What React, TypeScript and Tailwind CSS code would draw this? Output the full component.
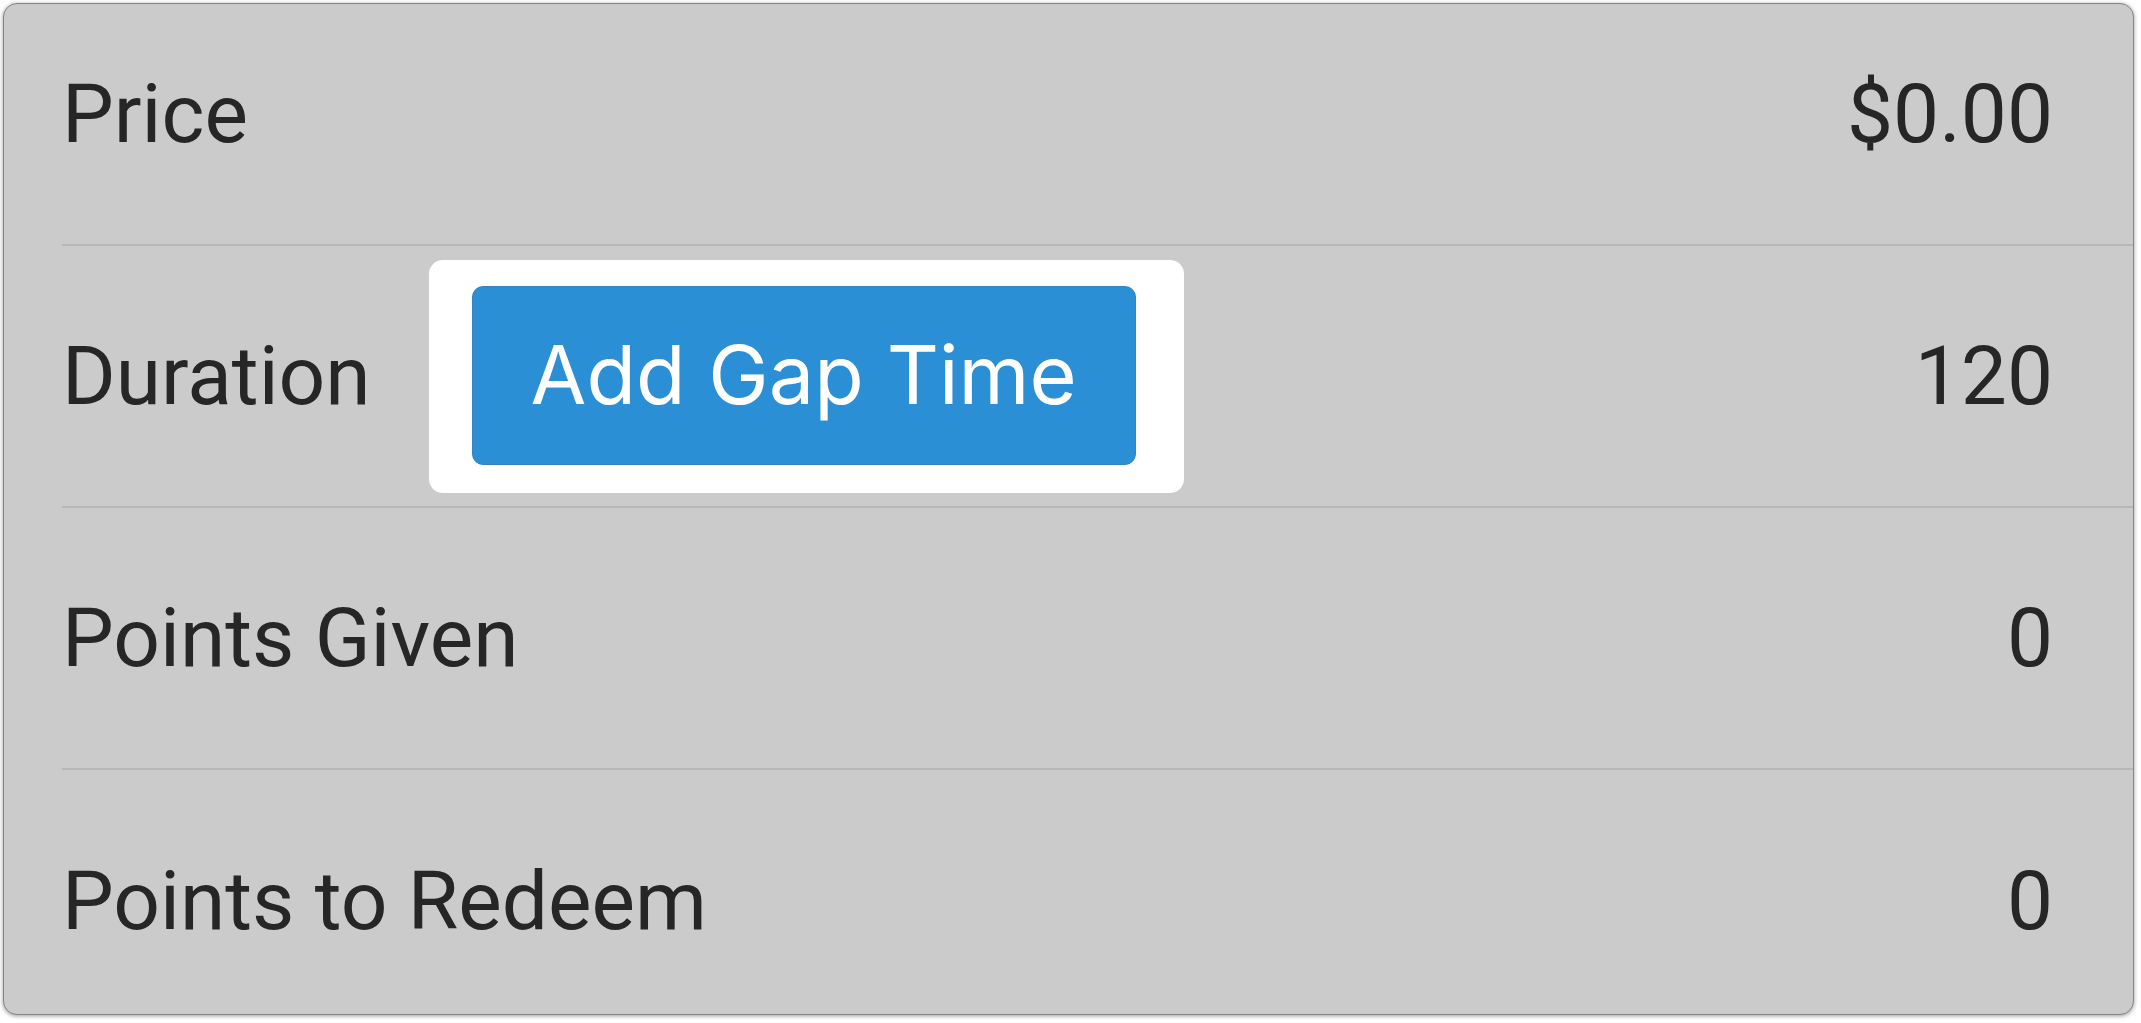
const rows = [
  { label: "Price", value: "$0.00" },
  { label: "Duration", value: "120", action: "Add Gap Time" },
  { label: "Points Given", value: "0" },
  { label: "Points to Redeem", value: "0" },
]

function Divider() {
  return <div className="ml-[58px] h-[2px] bg-[#b7b7b7]" />
}

export default function App() {
  return (
    <div className="w-[2141px] h-[1023px] bg-white pl-[3px] pr-[7px] pt-[3px] pb-[8px]">
      <div className="flex h-full flex-col overflow-hidden rounded-[14px] border border-[#858585] bg-[#cbcbcb] shadow-[0_1px_4px_rgba(0,0,0,0.4)] font-['Roboto',sans-serif] text-[82px] text-[#262626]">
        <div className="flex h-[240px] items-center justify-between pb-[20px] pl-[58px] pr-[80px]">
          <span>{rows[0].label}</span>
          <span>{rows[0].value}</span>
        </div>
        <Divider />
        <div className="flex h-[260px] items-center justify-between pl-[58px] pr-[80px]">
          <div className="flex items-center">
            <span>{rows[1].label}</span>
            <div className="ml-[58px] rounded-[14px] bg-white pl-[43px] pr-[48px] pt-[26px] pb-[28px]">
              <button className="flex h-[179px] w-[664px] items-center justify-center rounded-[11px] border border-[#3483c0] bg-[#2b8fd6] font-['Inter',sans-serif] text-[81px] leading-none text-white">
                {rows[1].action}
              </button>
            </div>
          </div>
          <span>{rows[1].value}</span>
        </div>
        <Divider />
        <div className="flex h-[260px] items-center justify-between pl-[58px] pr-[80px]">
          <span>{rows[2].label}</span>
          <span>{rows[2].value}</span>
        </div>
        <Divider />
        <div className="flex flex-1 items-center justify-between pt-[18px] pl-[58px] pr-[80px]">
          <span>{rows[3].label}</span>
          <span>{rows[3].value}</span>
        </div>
      </div>
    </div>
  )
}
